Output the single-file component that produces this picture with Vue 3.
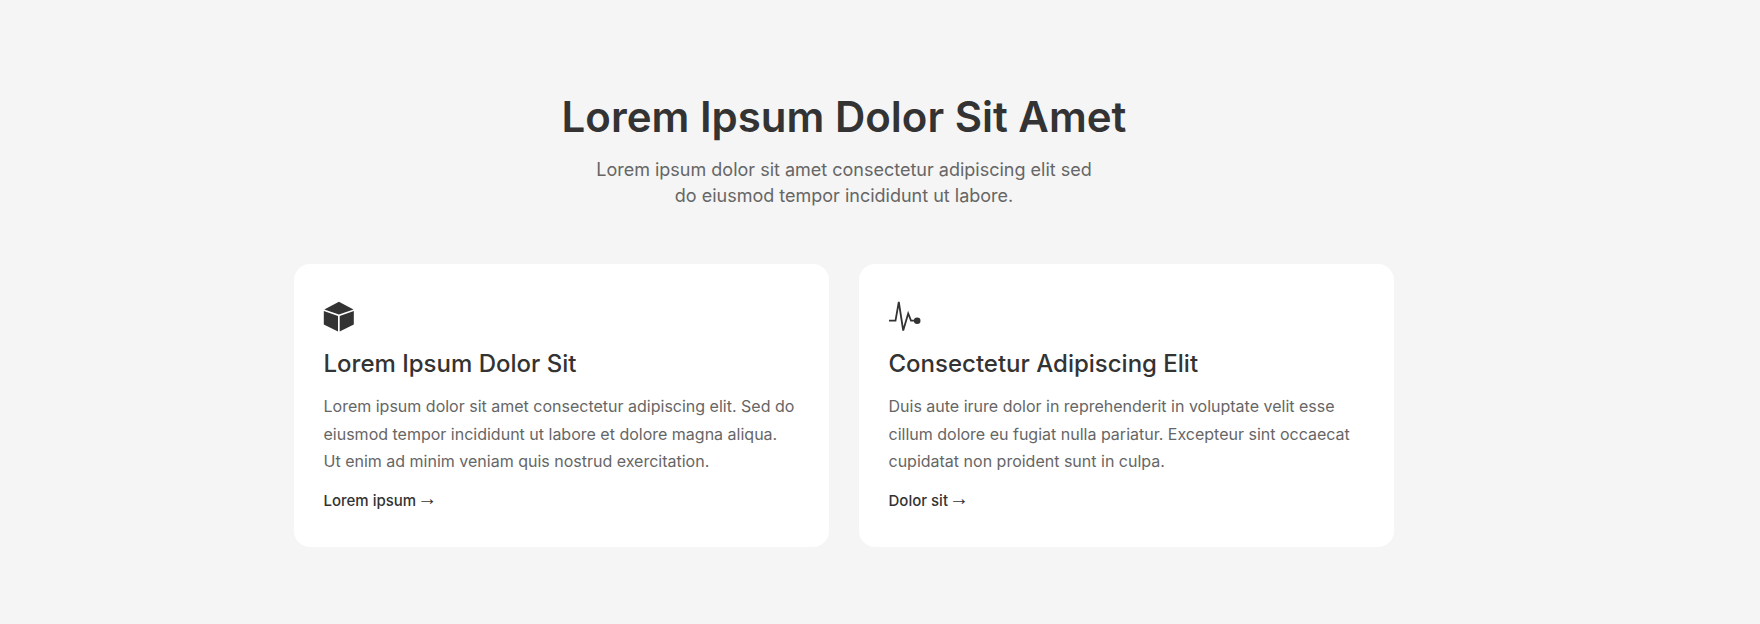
<template>
  <section class="features">
    <header class="intro">
      <h1>Lorem Ipsum Dolor Sit Amet</h1>
      <p>Lorem ipsum dolor sit amet consectetur adipiscing elit sed<br />do eiusmod tempor incididunt ut labore.</p>
    </header>
    <div class="cards">
      <article class="card">
        <svg class="icon" width="32" height="32" viewBox="0 0 32 32">
          <path d="M14.900 1.700 L29.500 9.500 L14.900 14.500 L0.300 9.500 Z" />
          <path d="M-0.200 11 L14 16 L14 31.500 L-0.200 24.500 Z" />
          <path d="M29.800 11 L15.700 16 L15.700 31.500 L29.800 24.500 Z" />
        </svg>
        <h2>Lorem Ipsum Dolor Sit</h2>
        <p>Lorem ipsum dolor sit amet consectetur adipiscing elit. Sed do eiusmod tempor incididunt ut labore et dolore magna aliqua. Ut enim ad minim veniam quis nostrud exercitation.</p>
        <a href="#">Lorem ipsum <span class="arrow">→</span></a>
      </article>
      <article class="card">
        <svg class="icon" width="32" height="32" viewBox="0 0 32 32">
          <path class="line" d="M0 20.700 H6.500 L9.800 2 L14.200 30.500 L19.200 13.500 L22 20.700 H26" />
          <circle cx="28.200" cy="20.700" r="3.300" />
        </svg>
        <h2>Consectetur Adipiscing Elit</h2>
        <p>Duis aute irure dolor in reprehenderit in voluptate velit esse cillum dolore eu fugiat nulla pariatur. Excepteur sint occaecat cupidatat non proident sunt in culpa.</p>
        <a href="#">Dolor sit <span class="arrow">→</span></a>
      </article>
    </div>
  </section>
</template>

<script setup>
</script>

<style>
html, body {
  background: #f5f5f5;
}
</style>

<style scoped>
.features {
  box-sizing: border-box;
  width: 1760px;
  height: 624px;
  padding: 89px 72px 0 0;
  font-family: Inter, "Liberation Sans", sans-serif;
  background: #f5f5f5;
}
.intro {
  text-align: center;
  margin-bottom: 55px;
}
.intro h1 {
  margin: 0 0 12px;
  font-size: 42px;
  line-height: 56px;
  font-weight: 600;
  color: #333;
}
.intro p {
  margin: 0;
  font-size: 18px;
  line-height: 26px;
  color: #666;
}
.cards {
  display: grid;
  grid-template-columns: 535px 535px;
  gap: 30px;
  justify-content: center;
}
.card {
  height: 283px;
  box-sizing: border-box;
  padding: 36px 32px 0 29.500px;
  background: #fff;
  border-radius: 16px;
}
.icon {
  display: block;
  fill: #333;
  overflow: visible;
}
.line {
  fill: none;
  stroke: #333;
  stroke-width: 1.800;
}
.card h2 {
  margin: 16px 0 13px;
  font-size: 24px;
  line-height: 32px;
  font-weight: 500;
  color: #333;
}
.card p {
  margin: 0 0 12px;
  font-size: 16px;
  line-height: 27.500px;
  color: #666;
}
.card a {
  font-size: 15px;
  line-height: 24px;
  font-weight: 500;
  color: #333;
  text-decoration: none;
}
.arrow {
  margin-left: -3px;
  font-family: "Liberation Sans", sans-serif;
  font-size: 20px;
  line-height: 1;
  font-weight: 400;
  vertical-align: 1px;
}
</style>
